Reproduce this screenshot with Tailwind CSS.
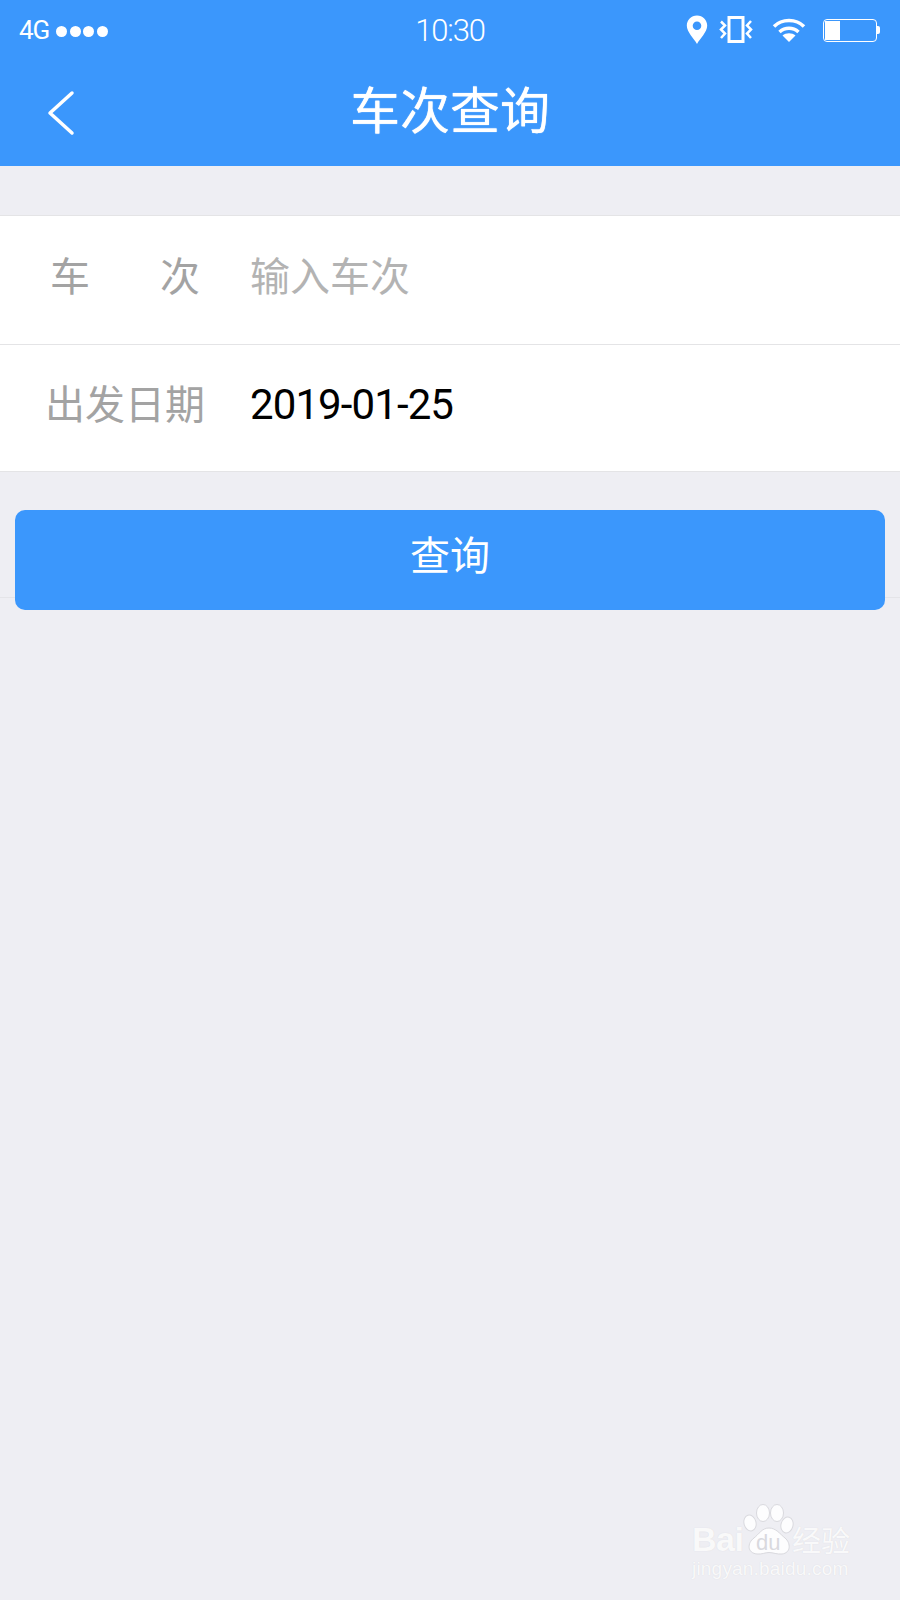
<!DOCTYPE html>
<html lang="zh">
<head>
<meta charset="utf-8">
<script src="https://cdn.jsdelivr.net/npm/@tailwindcss/browser@4"></script>
</head>
<body class="m-0">
<div class="relative w-[900px] h-[1600px] overflow-hidden bg-[#eeeef3] font-['Noto_Sans_CJK_SC','Noto_Sans',sans-serif]">
  <header class="h-[166px] bg-[#3b97fc] text-white flex flex-col">
    <div class="relative h-[60px] flex items-center justify-between pl-[19px] pr-[20px]">
      <div class="flex items-center">
        <span class="font-['Roboto',sans-serif] text-[26px] tracking-[-1px] leading-none">4G</span>
        <div class="flex gap-[2.500px] ml-[7px] mt-[3px]">
          <i class="block w-[11px] h-[11px] rounded-full bg-white"></i>
          <i class="block w-[11px] h-[11px] rounded-full bg-white"></i>
          <i class="block w-[11px] h-[11px] rounded-full bg-white"></i>
          <i class="block w-[11px] h-[11px] rounded-full bg-white"></i>
        </div>
      </div>
      <span class="absolute left-0 right-0 text-center font-['Roboto',sans-serif] font-light text-[31px] tracking-[-1.2px] leading-none">10:30</span>
      <div class="flex items-center">
        <svg width="22" height="30" viewBox="0 0 22 30" class="mr-[11px]"><path fill="#fff" fill-rule="evenodd" d="M11 .5C5.200.5.800 5 .800 10.600c0 6.600 7.200 13 10.200 18.400 3-5.400 10.200-11.800 10.200-18.400C21.200 5 16.800.5 11 .5Zm0 6a4.300 4.300 0 1 1 0 8.600 4.300 4.300 0 0 1 0-8.600Z"/></svg>
        <svg width="34" height="28" viewBox="0 0 34 28" class="mr-[19px]" fill="none" stroke="#fff"><rect x="10" y="1.500" width="14" height="24" stroke-width="3"/><path stroke-width="2.500" d="M2 5.500l4 4-4 4 4 4-4 4.500M32 5l-4 4.500 4 4-4 4 4 4.500"/></svg>
        <svg width="34" height="26" viewBox="0 0 34 26" class="mr-[17px]" fill="none" stroke="#fff" stroke-width="3.500"><path d="M2 9.500C10 1.500 24 1.500 32 9.500"/><path d="M7.500 15c5.500-5 13.500-5 19 0"/><path fill="#fff" stroke="none" d="M17 25l-6.500-6.500c3.500-3 9.500-3 13 0Z"/></svg>
        <div class="flex items-center">
          <div class="w-[54px] h-[23px] rounded-[4px] border border-white p-[1px]"><div class="w-[15px] h-full bg-white"></div></div>
          <div class="w-[3px] h-[8px] bg-white rounded-r-[2px]"></div>
        </div>
      </div>
    </div>
    <div class="relative flex-1 flex items-center justify-center pb-[12px]">
      <svg width="30" height="46" viewBox="0 0 30 46" class="absolute left-[47px] top-[30px]" fill="none" stroke="#fff" stroke-width="3.500" stroke-linecap="round" stroke-linejoin="round"><path d="M25 3 3 23l22 20"/></svg>
      <h1 class="text-[50px] leading-none font-normal [text-shadow:0_0_1px_#fff]">车次查询</h1>
    </div>
  </header>

  <section class="mt-[49px] bg-white border-y border-[#e4e4e6]">
    <div class="h-[129px] flex items-center border-b border-[#e4e4e6] text-[40px] leading-none">
      <div class="w-[250px] pl-[50px] pr-[50px] pb-[13px] flex justify-between text-[#a3a3a3]"><span>车</span><span>次</span></div>
      <span class="pb-[13px] text-[#b3b3b3]">输入车次</span>
    </div>
    <div class="h-[126px] flex items-center text-[40px] leading-none">
      <div class="w-[250px] pl-[45px] pb-[13px] text-[#a3a3a3]">出发日期</div>
      <span class="pb-[6px] font-['Roboto',sans-serif] text-[42px] text-black tracking-[-0.9px]">2019-01-25</span>
    </div>
  </section>

  <div class="relative mt-[38px] px-[15px]">
    <div class="absolute left-0 right-0 top-[87px] border-t border-[#e4e4e8]"></div>
    <button class="relative block w-full h-[100px] pb-[14px] rounded-[10px] bg-[#3b97fc] text-white text-[40px] leading-none">查询</button>
  </div>

  <div class="absolute left-[690px] top-[1500px] w-[170px] h-[80px] text-white/85 [text-shadow:0_0_1px_#d4d4d9]">
    <svg width="170" height="60" viewBox="0 0 170 60" class="absolute left-0 top-0"><g fill="#fff" fill-opacity=".85" stroke="#d9d9de"><ellipse cx="60" cy="23" rx="6" ry="8" transform="rotate(-15 60 23)"/><ellipse cx="73" cy="13" rx="6.500" ry="8.500"/><ellipse cx="87" cy="13" rx="6.500" ry="8.500"/><ellipse cx="97" cy="25" rx="6" ry="8" transform="rotate(15 97 25)"/><path d="M79 28c-7 0-10 6-15 10-7 5-7 15 3 16 5 .5 8-1.500 12-1.500s8 2 13 1.500c9-1 9-11 3-16-5-4-9-10-16-10Z"/></g></svg>
    <span class="absolute left-[2px] top-[22px] font-['Liberation_Sans',sans-serif] font-bold text-[34px] leading-none tracking-[-0.5px]">Bai</span>
    <span class="absolute left-[66px] top-[32px] font-['Liberation_Sans',sans-serif] text-[22px] leading-none text-[#d9d9de] [text-shadow:none]">du</span>
    <span class="absolute left-[102px] top-[25px] text-[29px] leading-none">经验</span>
    <span class="absolute left-[2px] top-[59px] font-['Liberation_Sans',sans-serif] text-[19px] leading-none tracking-[0.2px] whitespace-nowrap">jingyan.baidu.com</span>
  </div>
</div>
</body>
</html>
